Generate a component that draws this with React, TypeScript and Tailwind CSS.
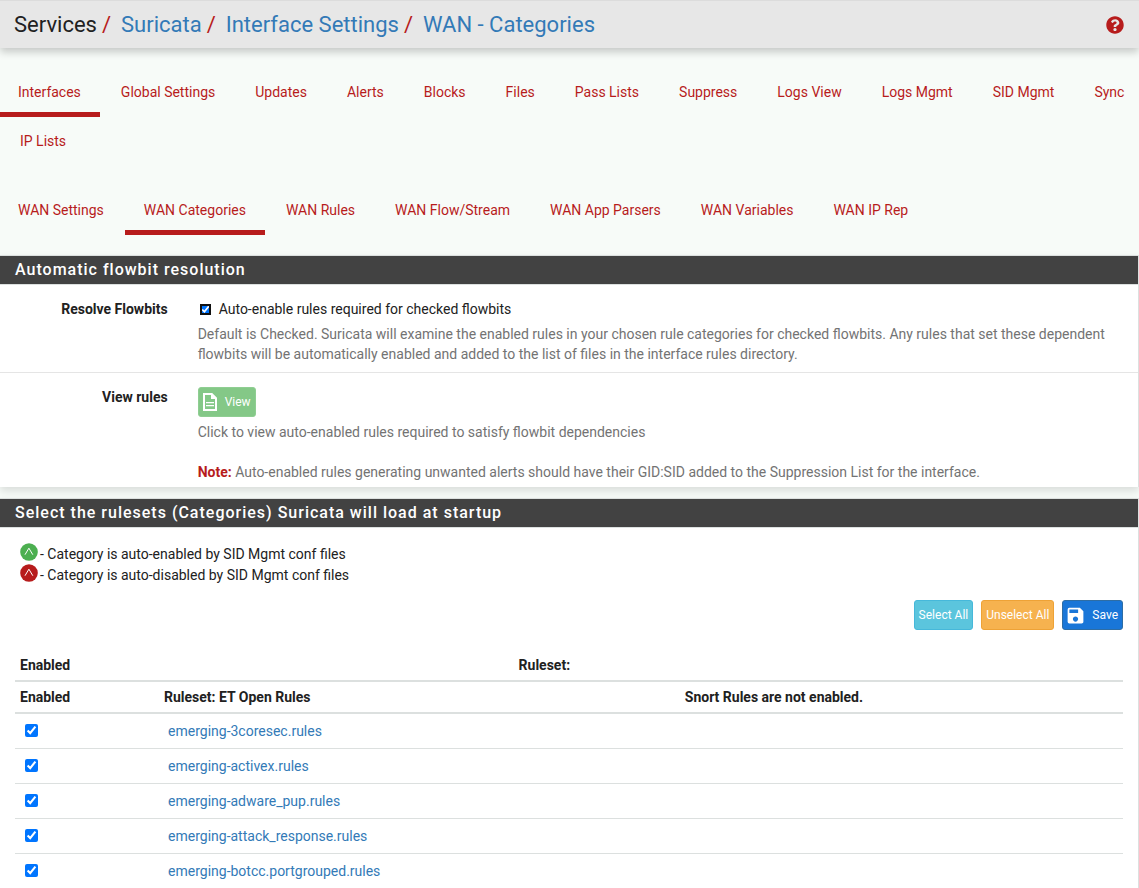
import React from "react";
import { FaQuestionCircle } from "react-icons/fa";
import { MdSave } from "react-icons/md";

const mainTabs = ["Interfaces", "Global Settings", "Updates", "Alerts", "Blocks", "Files", "Pass Lists", "Suppress", "Logs View", "Logs Mgmt", "SID Mgmt", "Sync", "IP Lists"];
const wanTabs = ["WAN Settings", "WAN Categories", "WAN Rules", "WAN Flow/Stream", "WAN App Parsers", "WAN Variables", "WAN IP Rep"];
const crumbs = ["Suricata", "Interface Settings", "WAN - Categories"];
const rulesets = ["emerging-3coresec.rules", "emerging-activex.rules", "emerging-adware_pup.rules", "emerging-attack_response.rules", "emerging-botcc.portgrouped.rules"];

function Tabs({ items, active, label }: { items: string[]; active: string; label: string }) {
  return (
    <nav aria-label={label} className="-mr-4">
      <ul className="flex flex-wrap">
        {items.map((item) => (
          <li key={item} className="mx-px first:ml-0">
            <a
              href="#"
              className={`block border-b-[5px] pt-3.5 pr-[19px] pb-2.5 text-[#b71c1c] ${item === items[0] ? "pl-[18px]" : "pl-[19px]"} ${item === active ? "border-[#b71c1c]" : "border-transparent"}`}
            >
              {item}
            </a>
          </li>
        ))}
      </ul>
    </nav>
  );
}

function Panel({ title, children }: { title: string; children: React.ReactNode }) {
  return (
    <section className="border-t border-r border-[#dce0df] bg-white shadow-[0_4px_8px_rgba(0,0,0,0.12)]">
      <h2 className="border-b border-[#dce0df] bg-[#424242] bg-clip-padding px-[15px] py-1 text-base leading-5 font-medium tracking-[1px] text-white">{title}</h2>
      {children}
    </section>
  );
}

function StatusIcon({ className }: { className: string }) {
  return (
    <svg viewBox="0 0 18 18" className={`size-[18px] shrink-0 ${className}`} aria-hidden="true">
      <circle cx="9" cy="9" r="8.8" fill="currentColor" />
      <path d="M5 11.7 8.9 5.2l3.9 6.5" fill="none" stroke="white" strokeWidth="1" />
    </svg>
  );
}

export default function App() {
  return (
    <div className="min-h-screen overflow-hidden bg-[#f7fbf8] font-['Roboto',sans-serif] text-sm leading-5 text-[#212121]">
      <header className="flex h-12 items-center justify-between border-t border-[#dcdcdc] bg-[#e7e7e7] pr-[15px] pl-3.5 shadow-[0_4px_8px_rgba(0,0,0,0.2)]">
        <h1 className="flex text-[22px] leading-7">
          <span>Services</span>
          {crumbs.map((crumb) => (
            <React.Fragment key={crumb}>
              <span className="pr-2.5 pl-[5px] text-[#b71c1c]">/</span>
              <a href="#" className="text-[#337ab7]">{crumb}</a>
            </React.Fragment>
          ))}
        </h1>
        <a href="#" aria-label="Help" className="text-[#b71c1c]"><FaQuestionCircle className="size-[18px]" /></a>
      </header>

      <div className="flex flex-col gap-5 py-5">
        <Tabs items={mainTabs} active="Interfaces" label="Suricata" />
        <Tabs items={wanTabs} active="WAN Categories" label="WAN interface" />
      </div>

      <main className="flex flex-col gap-[11px]">
        <Panel title="Automatic flowbit resolution">
          <div className="flex border-b border-[#e5e5e5] pt-3.5 pb-2">
            <div className="w-1/6 shrink-0 pr-[22px] text-right font-bold">Resolve Flowbits</div>
            <div className="flex-1 pr-6 pl-2">
              <label className="flex items-center gap-2">
                <input type="checkbox" defaultChecked className="ml-0.5 size-[11px] rounded-[2px] accent-[#0075ff] outline-2 -outline-offset-2 outline-[#101010]" />
                Auto-enable rules required for checked flowbits
              </label>
              <p className="mt-[5px] text-[#737373]">
                Default is Checked. Suricata will examine the enabled rules in your chosen rule categories for checked flowbits. Any rules that set these dependent flowbits will be automatically enabled and added to the list of files in the interface rules directory.
              </p>
            </div>
          </div>
          <div className="flex pt-3.5 pb-[5px]">
            <div className="w-1/6 shrink-0 pr-[22px] text-right font-bold">View rules</div>
            <div className="flex-1 pr-6 pl-2">
              <button type="button" className="flex h-[30px] items-center gap-2 rounded-[3px] border border-[#8fce92] bg-[#84c887] px-1 text-xs text-white">
                <svg viewBox="0 0 14 18" className="h-[18px] w-3.5" aria-hidden="true">
                  <path d="M1 1h7.8L13 5.2V17H1z" fill="none" stroke="white" strokeWidth="2" />
                  <path d="M8 1v5h5.5zM3 9h8v1.3H3zM3 12h8v1.3H3z" fill="white" />
                </svg>
                View
              </button>
              <p className="mt-[5px] text-[#737373]">Click to view auto-enabled rules required to satisfy flowbit dependencies</p>
              <p className="mt-5 text-[#737373]">
                <strong className="text-[#b71c1c]">Note:</strong> Auto-enabled rules generating unwanted alerts should have their GID:SID added to the Suppression List for the interface.
              </p>
            </div>
          </div>
        </Panel>

        <Panel title="Select the rulesets (Categories) Suricata will load at startup">
          <div className="px-[15px] pt-[15px]">
            <ul className="pl-[5px]">
              <li className="flex h-[21px] items-start gap-0.5 leading-[23px]">
                <StatusIcon className="text-[#4caf50]" />- Category is auto-enabled by SID Mgmt conf files
              </li>
              <li className="flex h-[21px] items-start gap-0.5 leading-[23px]">
                <StatusIcon className="text-[#b71c1c]" />- Category is auto-disabled by SID Mgmt conf files
              </li>
            </ul>
            <div className="mt-[15px] flex justify-end gap-2 text-xs text-white">
              <button type="button" className="h-[30px] rounded-[3px] border border-[#46b8da] bg-[#5bc5dd] px-1">Select All</button>
              <button type="button" className="h-[30px] rounded-[3px] border border-[#eea236] bg-[#f6b24f] px-1">Unselect All</button>
              <button type="button" className="flex h-[30px] items-center gap-1.5 rounded-[3px] border border-[#2e6da4] bg-[#1976d8] pr-1 pl-0.5">
                <MdSave className="size-[21px]" />Save
              </button>
            </div>
            <table className="mt-5 w-full table-fixed text-left">
              <thead>
                <tr className="border-b-2 border-[#dce0df]">
                  <th className="w-[45%] px-[5px] py-[5px]">Enabled</th>
                  <th className="px-[5px] py-[5px]">Ruleset:</th>
                </tr>
              </thead>
            </table>
            <table className="w-full table-fixed text-left">
              <thead>
                <tr className="border-b-2 border-[#dce0df]">
                  <th className="w-[13%] px-[5px] py-[5px]">Enabled</th>
                  <th className="w-[47%] px-[5px] py-[5px]">Ruleset: ET Open Rules</th>
                  <th className="px-[5px] py-[5px]">Snort Rules are not enabled.</th>
                </tr>
              </thead>
              <tbody>
                {rulesets.map((name) => (
                  <tr key={name} className="h-[35px] border-b border-[#dce0df]">
                    <td className="px-2.5"><input type="checkbox" defaultChecked aria-label={name} className="block size-[13px] accent-[#0075ff]" /></td>
                    <td className="px-[9px]"><a href="#" className="text-[#337ab7]">{name}</a></td>
                    <td />
                  </tr>
                ))}
              </tbody>
            </table>
          </div>
        </Panel>
      </main>
    </div>
  );
}
